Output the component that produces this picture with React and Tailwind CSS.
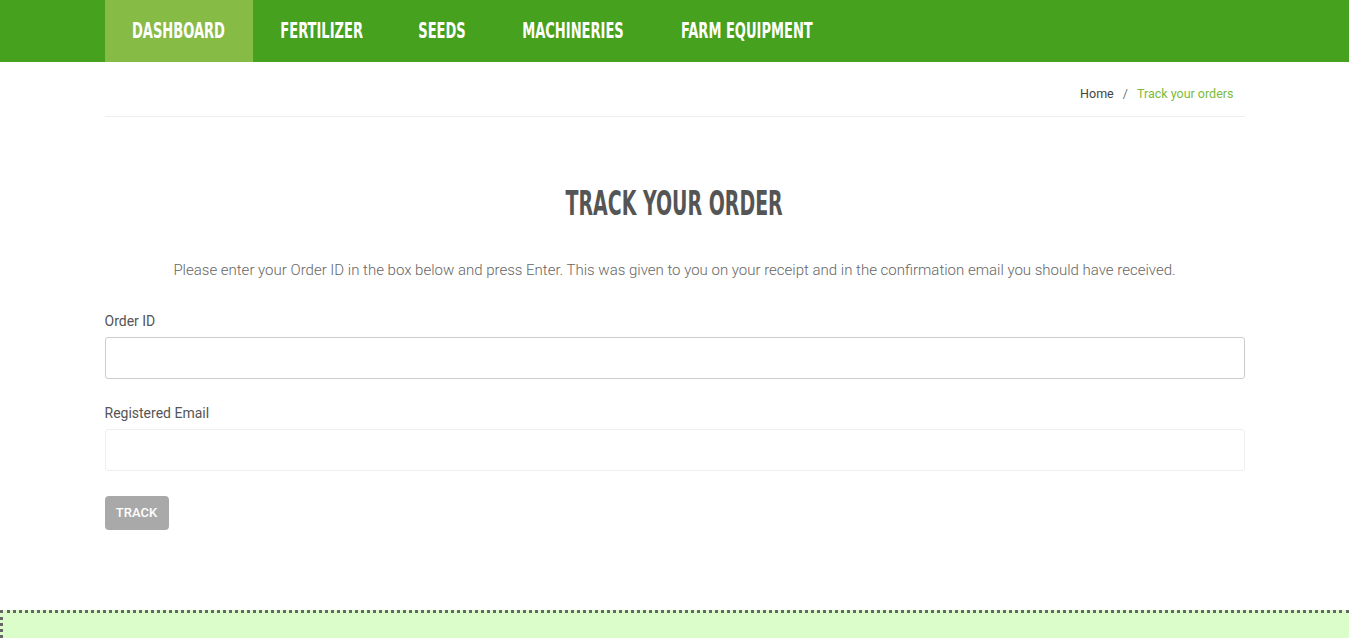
import React, { useState } from 'react';

const navItems = [
  { label: 'DASHBOARD', w: 'w-[148px]', active: true },
  { label: 'FERTILIZER', w: 'w-[138px]' },
  { label: 'SEEDS', w: 'w-[103px]' },
  { label: 'MACHINERIES', w: 'w-[159px]' },
  { label: 'FARM EQUIPMENT', w: 'w-[189px]' },
];

function App() {
  const [orderId, setOrderId] = useState('');
  const [email, setEmail] = useState('');

  return (
    <div className="min-h-screen bg-white font-['Roboto',sans-serif]">
      {/* top menu */}
      <nav className="bg-[#46a11e] h-[62px]">
        <ul className="w-[1140px] mx-auto flex h-full">
          {navItems.map((item) => (
            <li
              key={item.label}
              className={`${item.w} h-full flex items-center justify-center pb-[2px] text-white text-[22px] font-bold font-['DejaVu_Sans_Condensed',sans-serif] ${
                item.active ? 'bg-[#86bb46]' : ''
              }`}
            >
              <span className="inline-block whitespace-nowrap scale-x-[0.66]">{item.label}</span>
            </li>
          ))}
        </ul>
      </nav>

      <div className="w-[1140px] mx-auto">
        {/* breadcrumb */}
        <div className="h-[55px] border-b border-[#eeeeee] flex items-center justify-end pr-[11px] pt-[10px] text-[12.5px]">
          <span className="text-[#444]">Home</span>
          <span className="text-[#777] mx-[9px]">/</span>
          <span className="text-[#7cbb3a]">Track your orders</span>
        </div>

        <h1 className="mt-[68px] text-center text-[#555] text-[34px] leading-[36px] font-bold font-['DejaVu_Sans_Condensed',sans-serif]">
          <span className="inline-block whitespace-nowrap scale-x-[0.62]">TRACK YOUR ORDER</span>
        </h1>

        <p className="mt-[39px] text-center text-[15px] text-[#666] font-light leading-[20px]">
          Please enter your Order ID in the box below and press Enter. This was given to you on your receipt and in the confirmation email you should have received.
        </p>

        <form className="mt-[31px]" onSubmit={(e) => e.preventDefault()}>
          <label className="block text-[14px] text-[#555] leading-[20px]">Order ID</label>
          <input
            type="text"
            value={orderId}
            onChange={(e) => setOrderId(e.target.value)}
            className="mt-[6px] block w-full h-[42px] border border-[#cccccc] rounded-[3px] px-3 outline-none"
          />

          <label className="block mt-[24px] text-[14px] text-[#555] leading-[20px]">Registered Email</label>
          <input
            type="email"
            value={email}
            onChange={(e) => setEmail(e.target.value)}
            className="mt-[6px] block w-full h-[42px] border border-[#eeeeee] rounded-[3px] px-3 outline-none"
          />

          <button
            type="submit"
            className="mt-[25px] w-[64px] h-[34px] bg-[#a9a9a9] text-white text-[13px] font-medium rounded-[4px]"
          >
            TRACK
          </button>
        </form>
      </div>

      {/* footer strip */}
      <div className="mt-[80px] h-[40px] bg-[#dbfdc9] border-t-[3px] border-l-[3px] border-dotted border-[#666]"></div>
    </div>
  );
}

export default App;
